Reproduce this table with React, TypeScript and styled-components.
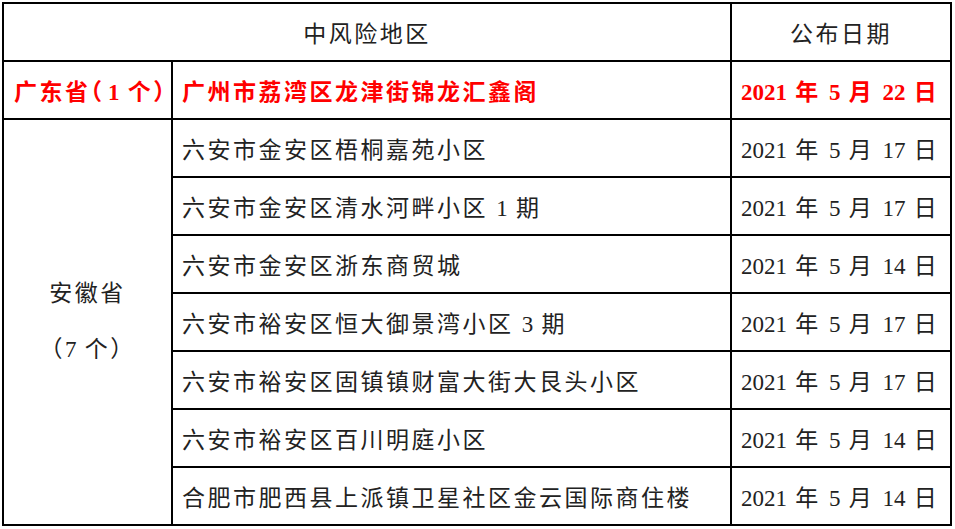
import React from "react";
import styled, { createGlobalStyle } from "styled-components";

const GlobalStyle = createGlobalStyle`
  html, body {
    margin: 0;
    padding: 0;
    background: #ffffff;
  }
  body {
    font-family: "Liberation Serif", "Noto Sans CJK SC", serif;
    color: #222222;
  }
`;

const Page = styled.div`
  padding: 2px 0 0 2px;
`;

const Sheet = styled.div`
  display: grid;
  grid-template-columns: 169px 559px 220px;
  grid-auto-rows: 58px;
  border-top: 2px solid #000;
  border-left: 2px solid #000;
  width: max-content;
`;

const Cell = styled.div<{ $align?: "center" | "left"; $red?: boolean }>`
  box-sizing: border-box;
  display: flex;
  align-items: center;
  justify-content: ${(p) => (p.$align === "center" ? "center" : "flex-start")};
  padding-left: ${(p) => (p.$align === "center" ? "0" : "9px")};
  border-right: 2px solid #000;
  border-bottom: 2px solid #000;
  font-size: 23px;
  white-space: nowrap;
  word-spacing: 2.5px;
  color: ${(p) => (p.$red ? "#ff0000" : "#222222")};
  font-weight: ${(p) => (p.$red ? 700 : 400)};
`;

const HeadCell = styled(Cell)`
  grid-column: 1 / span 2;
`;

const ProvinceCell = styled(Cell)`
  padding-left: 10px;
`;

const RegionCell = styled(Cell)`
  grid-row: span 7;
  flex-direction: column;
  line-height: 56px;
`;

const Line = styled.span`
  display: block;
`;

const Run = styled.span<{ $cjk: boolean }>`
  letter-spacing: ${(p) => (p.$cjk ? "2.5px" : "0")};
`;

// half-width brackets, as the source document sets them in this cell
const Bracket = styled.span<{ $after?: number }>`
  font-feature-settings: "halt";
  letter-spacing: ${(p) => p.$after ?? 0}px;
`;

type Row = { place: string; date: string };

const anhui: Row[] = [
  { place: "六安市金安区梧桐嘉苑小区", date: "2021 年 5 月 17 日" },
  { place: "六安市金安区清水河畔小区 1 期", date: "2021 年 5 月 17 日" },
  { place: "六安市金安区浙东商贸城", date: "2021 年 5 月 14 日" },
  { place: "六安市裕安区恒大御景湾小区 3 期", date: "2021 年 5 月 17 日" },
  { place: "六安市裕安区固镇镇财富大街大艮头小区", date: "2021 年 5 月 17 日" },
  { place: "六安市裕安区百川明庭小区", date: "2021 年 5 月 14 日" },
  { place: "合肥市肥西县上派镇卫星社区金云国际商住楼", date: "2021 年 5 月 14 日" },
];

// split text so that only the CJK characters get the wide tracking
function Text({ value }: { value: string }) {
  const runs: { text: string; cjk: boolean }[] = [];
  for (const ch of value) {
    const cjk = ch.charCodeAt(0) > 0x2e80;
    const last = runs[runs.length - 1];
    if (last && last.cjk === cjk) last.text += ch;
    else runs.push({ text: ch, cjk });
  }
  return (
    <Line>
      {runs.map((r, i) => (
        <Run key={i} $cjk={r.cjk}>
          {r.text}
        </Run>
      ))}
    </Line>
  );
}

export default function App() {
  return (
    <Page>
      <GlobalStyle />
      <Sheet>
        <HeadCell $align="center">
          <Text value="中风险地区" />
        </HeadCell>
        <Cell $align="center">
          <Text value="公布日期" />
        </Cell>

        <ProvinceCell $red>
          <Line>
            <Run $cjk>广东省</Run>
            <Bracket $after={6}>（</Bracket>
            <Run $cjk={false}>1 </Run>
            <Run $cjk>个</Run>
            <Bracket>）</Bracket>
          </Line>
        </ProvinceCell>
        <Cell $red>
          <Text value="广州市荔湾区龙津街锦龙汇鑫阁" />
        </Cell>
        <Cell $red>
          <Text value="2021 年 5 月 22 日" />
        </Cell>

        <RegionCell $align="center">
          <Text value="安徽省" />
          <Text value="（7 个）" />
        </RegionCell>
        {anhui.map((r) => (
          <React.Fragment key={r.place}>
            <Cell>
              <Text value={r.place} />
            </Cell>
            <Cell>
              <Text value={r.date} />
            </Cell>
          </React.Fragment>
        ))}
      </Sheet>
    </Page>
  );
}
